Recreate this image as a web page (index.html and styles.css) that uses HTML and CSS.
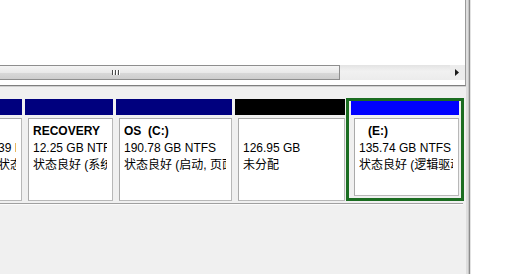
FILE: index.html
```html
<!DOCTYPE html>
<html lang="zh-CN">
<head>
<meta charset="utf-8">
<title>磁盘管理</title>
<link rel="stylesheet" href="styles.css">
</head>
<body>
<div class="window">
  <div class="main">
    <div class="list">
      <div class="list-body"></div>
      <div class="hscroll">
        <div class="thumb"><span class="grip"><i></i><i></i><i></i></span></div>
        <div class="track"></div>
        <div class="arrow">
          <svg width="4" height="7" viewBox="0 0 4 7"><path d="M0 0 L4 3.5 L0 7 Z" fill="#1a1a1a"/></svg>
        </div>
      </div>
      <div class="list-foot"></div>
    </div>
    <div class="disks">
      <div class="disk-row">
        <div class="part p1">
          <div class="hdr navy"></div>
          <div class="box"><div class="txt"><b>&nbsp;</b><span>39 MB FAT</span><span>状态良好 (OEM 分区)</span></div></div>
        </div>
        <div class="part p2">
          <div class="hdr navy"></div>
          <div class="box"><div class="txt"><b>RECOVERY</b><span>12.25 GB NTFS</span><span>状态良好 (系统, 主分区)</span></div></div>
        </div>
        <div class="part p3">
          <div class="hdr navy"></div>
          <div class="box"><div class="txt"><b>OS&nbsp;&nbsp;(C:)</b><span>190.78 GB NTFS</span><span>状态良好 (启动, 页面文件, 故障转储, 主分区)</span></div></div>
        </div>
        <div class="part p4">
          <div class="hdr black"></div>
          <div class="box"><div class="txt"><b>&nbsp;</b><span>126.95 GB</span><span>未分配</span></div></div>
        </div>
        <div class="part p5 selected">
          <div class="hdr blue"></div>
          <div class="box"><div class="txt"><b class="drive">(E:)</b><span>135.74 GB NTFS</span><span>状态良好 (逻辑驱动器)</span></div></div>
        </div>
      </div>
      <div class="row-line"></div>
    </div>
  </div>
  <div class="vsep"></div>
  <div class="side"></div>
</div>
</body>
</html>
```

FILE: styles.css
```css
html, body {
  margin: 0;
  padding: 0;
}
body {
  width: 505px;
  height: 274px;
  overflow: hidden;
  background: #ffffff;
  font-family: "Liberation Sans", "Noto Sans CJK SC", sans-serif;
  font-size: 12px;
  color: #000;
}
.window {
  display: flex;
  height: 274px;
}
.main {
  width: 466px;
  flex: none;
  background: #f0f0f0;
  display: flex;
  flex-direction: column;
  overflow: hidden;
}
.list {
  background: #ffffff;
  width: 465px;
  border-bottom: 1px solid #7f7f7f;
  box-shadow: 0 1px 0 #cfcfcf;
  border-right: 1px solid #9a9a9a;
}
.list-body {
  height: 65px;
}
.hscroll {
  height: 15px;
  display: flex;
  background: #e9e9e9;
}
.thumb {
  width: 340px;
  flex: none;
  box-sizing: border-box;
  border: 1px solid #8e8e8e;
  border-left: none;
  background: linear-gradient(#f4f4f4, #e9e9e9 50%, #d9d9d9 51%, #cdcdcd);
  display: flex;
  align-items: center;
  justify-content: center;
}
.grip {
  display: flex;
  gap: 1px;
  height: 5px;
  margin-left: -107px;
}
.grip i {
  display: block;
  width: 1px;
  height: 5px;
  background: #4a4a4a;
  box-shadow: 1px 0 0 #ffffff;
  margin-right: 1px;
}
.track {
  flex: 1;
  background: linear-gradient(#e3e3e3, #f1f1f1 40%, #ececec);
}
.arrow {
  width: 15px;
  flex: none;
  display: flex;
  align-items: center;
  justify-content: center;
  background: #ececec;
}
.arrow svg {
  display: block;
  margin-left: -2px;
}
.list-foot {
  height: 5px;
}
.disks {
  padding-top: 12px;
}
.disk-row {
  display: flex;
  gap: 3px;
  margin-left: -10px;
  height: 103px;
}
.part {
  flex: none;
  box-sizing: border-box;
  padding-top: 1px;
  display: flex;
  flex-direction: column;
}
.p1 { width: 32px; }
.p2 { width: 88px; }
.p3 { width: 116px; }
.p4 { width: 110px; }
.p5 { width: 118px; margin-left: -2px; }
.hdr {
  height: 16px;
  flex: none;
}
.navy { background: #00007e; }
.black { background: #000000; }
.blue { background: #0000fe; }
.box {
  margin-top: 3px;
  margin-left: 3px;
  height: 83px;
  box-sizing: border-box;
  border: 1px solid #aaaaaa;
  border-right-color: #b8b8b8;
  border-bottom-color: #b8b8b8;
  background: #ffffff;
  padding: 4px 5px 0 4px;
}
.txt {
  display: flex;
  flex-direction: column;
  overflow: hidden;
  white-space: nowrap;
  line-height: 17px;
}
.txt b {
  font-weight: bold;
  white-space: pre;
}
.txt b.drive {
  padding-left: 9px;
}
.selected {
  border: 3px solid #1b6d21;
  padding: 0 2px 2px 2px;
}
.selected .hdr {
  height: 14px;
}
.selected .box {
  height: 78px;
}
.row-line {
  margin-top: 2px;
  width: 463px;
  border-top: 1px solid #a0a0a0;
  border-bottom: 1px solid #fbfbfb;
}
.vsep {
  width: 5px;
  flex: none;
  background: linear-gradient(to right, #dedede 0 2px, #c4c4c4 2px 3px, #8c8c8c 3px 4px, #e2e2e2 4px);
}
.side {
  flex: 1;
  background: #ffffff;
}
```
